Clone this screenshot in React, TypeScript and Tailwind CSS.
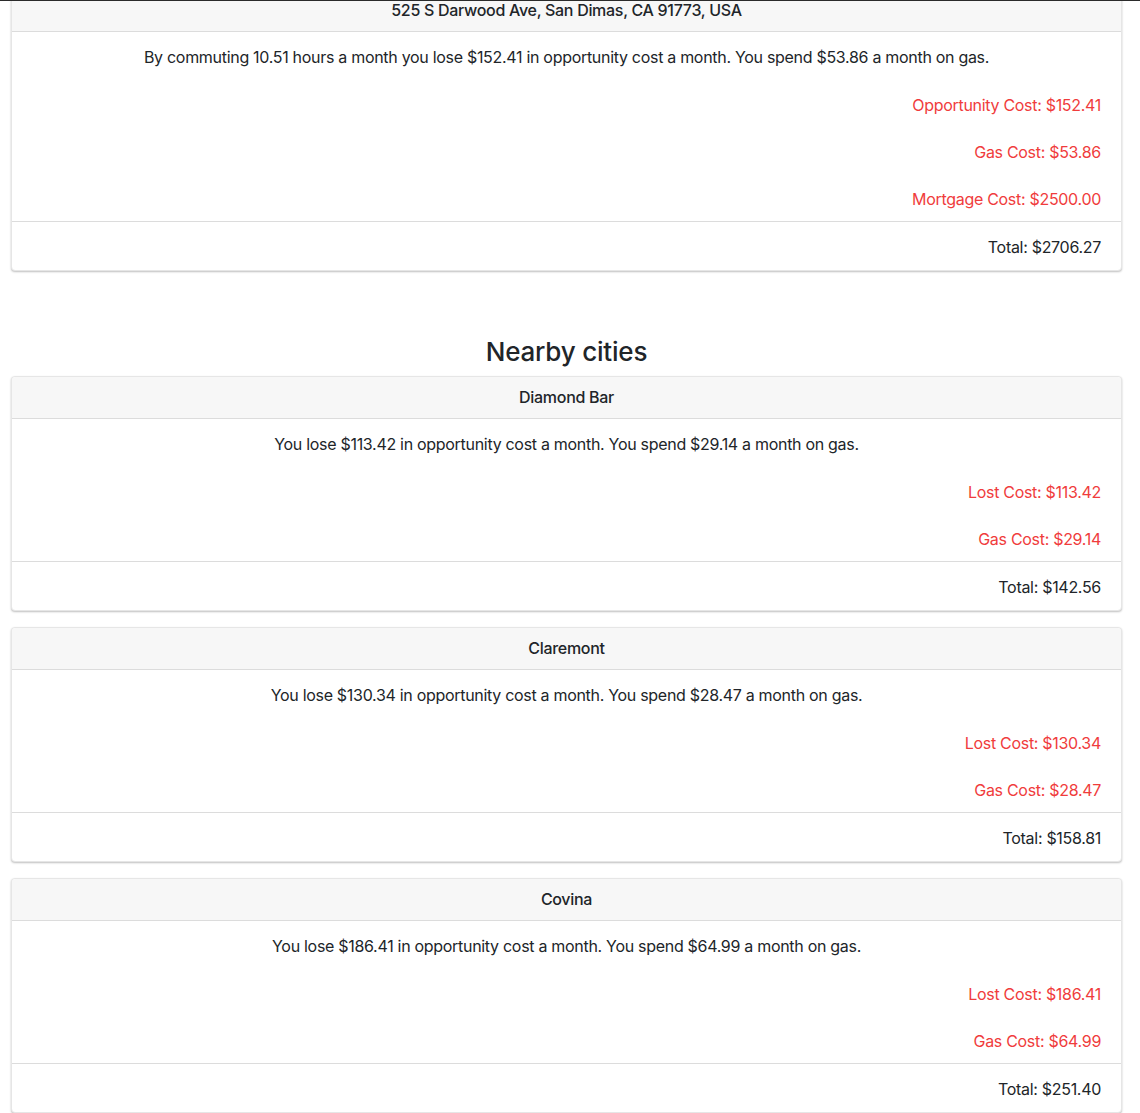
type Line = { label: string; value: string }

type City = {
  name: string
  summary: string
  costs: Line[]
  total: string
}

const home: City = {
  name: '525 S Darwood Ave, San Dimas, CA 91773, USA',
  summary:
    'By commuting 10.51 hours a month you lose $152.41 in opportunity cost a month. You spend $53.86 a month on gas.',
  costs: [
    { label: 'Opportunity Cost', value: '$152.41' },
    { label: 'Gas Cost', value: '$53.86' },
    { label: 'Mortgage Cost', value: '$2500.00' },
  ],
  total: '$2706.27',
}

const nearby: City[] = [
  {
    name: 'Diamond Bar',
    summary: 'You lose $113.42 in opportunity cost a month. You spend $29.14 a month on gas.',
    costs: [
      { label: 'Lost Cost', value: '$113.42' },
      { label: 'Gas Cost', value: '$29.14' },
    ],
    total: '$142.56',
  },
  {
    name: 'Claremont',
    summary: 'You lose $130.34 in opportunity cost a month. You spend $28.47 a month on gas.',
    costs: [
      { label: 'Lost Cost', value: '$130.34' },
      { label: 'Gas Cost', value: '$28.47' },
    ],
    total: '$158.81',
  },
  {
    name: 'Covina',
    summary: 'You lose $186.41 in opportunity cost a month. You spend $64.99 a month on gas.',
    costs: [
      { label: 'Lost Cost', value: '$186.41' },
      { label: 'Gas Cost', value: '$64.99' },
    ],
    total: '$251.40',
  },
]

function CostCard({ city, className = '' }: { city: City; className?: string }) {
  return (
    <div
      className={`rounded-[4px] border border-[#e6e6e6] bg-white shadow-[0_1px_2px_rgba(0,0,0,0.25)] ${className}`}
    >
      <div className="flex h-[42px] items-center justify-center rounded-t-[4px] border-b border-[#dcdcdc] bg-[#f7f7f7] px-5 pb-px text-[16px] font-medium text-[#212529]">
        {city.name}
      </div>
      <div className="flex flex-col gap-[23px] px-5 pt-[13px] pb-[10px] text-[16px] leading-6">
        <p className="mb-px text-center text-[#212529]">{city.summary}</p>
        {city.costs.map((c) => (
          <p key={c.label} className="text-right text-[#f03c3c]">
            {c.label}: {c.value}
          </p>
        ))}
      </div>
      <div className="border-t border-[#dcdcdc] px-5 pt-[13px] pb-[11px] text-right text-[16px] leading-6 text-[#212529]">
        Total: {city.total}
      </div>
    </div>
  )
}

export default function App() {
  return (
    <div
      className="relative h-[1113px] overflow-hidden bg-white tracking-[-0.3px]"
      style={{ fontFamily: 'Inter, "Noto Sans", "Liberation Sans", sans-serif' }}
    >
      <div className="absolute inset-x-0 top-0 z-10 h-px bg-[#2b2b2b]" />
      <div className="ml-[11px] w-[1111px]">
        <CostCard city={home} className="-mt-[11px]" />

        <h3 className="mt-[64px] mb-[7px] text-center text-[26px] leading-[34px] font-medium tracking-[-0.2px] text-[#212529]">
          Nearby cities
        </h3>

        <div className="flex flex-col gap-[16px]">
          {nearby.map((city) => (
            <CostCard key={city.name} city={city} />
          ))}
        </div>
      </div>
    </div>
  )
}
